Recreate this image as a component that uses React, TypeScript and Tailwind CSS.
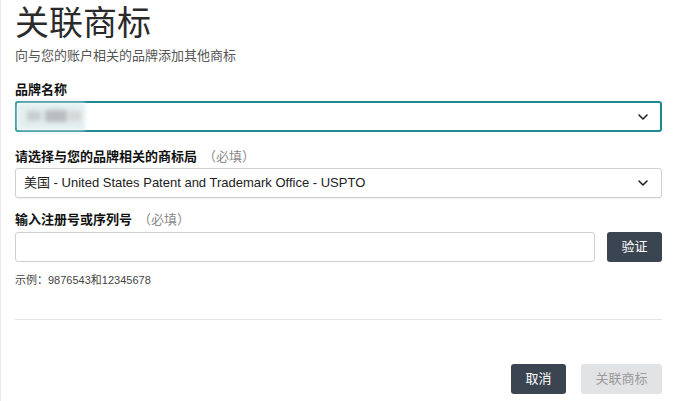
import React from "react";

const font = "font-['Liberation_Sans','Noto_Sans_CJK_SC',sans-serif]";

function Chevron() {
  return (
    <svg width="10" height="6" viewBox="0 0 10 6" fill="none" className="shrink-0">
      <path d="M1 1l4 4 4-4" stroke="#222" strokeWidth="1.6" strokeLinecap="round" strokeLinejoin="round" />
    </svg>
  );
}

function Label({ text, required }: { text: string; required?: boolean }) {
  return (
    <p className="text-[13px] leading-[18px] font-bold text-[#111]">
      {text}
      {required ? <span className="ml-[6px] font-normal text-[#888]">（必填）</span> : null}
    </p>
  );
}

export default function App() {
  return (
    <div className={`w-[680px] h-[401px] overflow-hidden bg-white border-l border-[#ececec] pl-[14px] pr-[18px] ${font}`}>
      <h1 className="pt-[3px] text-[34px] leading-[40px] font-normal text-[#2a2a2a]">关联商标</h1>
      <p className="mt-[4px] text-[13px] leading-[18px] text-[#555]">向与您的账户相关的品牌添加其他商标</p>

      <div className="mt-[16px]">
        <Label text="品牌名称" />
      </div>
      <div className="mt-[2px] flex h-[31px] items-center justify-between rounded-[3px] border-2 border-[#1d8991] pr-[12px]">
        <div className="relative h-[27px] w-[68px] blur-[2px] bg-[#e3efef]">
          <div className="absolute left-[10px] top-[8px] h-[10px] w-[14px] bg-[#c9cdcf]" />
          <div className="absolute left-[28px] top-[7px] h-[12px] w-[22px] bg-[#b8bcbf]" />
          <div className="absolute left-[52px] top-[8px] h-[10px] w-[12px] bg-[#d4d7d8]" />
        </div>
        <Chevron />
      </div>

      <div className="mt-[16px]">
        <Label text="请选择与您的品牌相关的商标局" required />
      </div>
      <div className="mt-[2px] flex h-[30px] items-center justify-between rounded-[3px] border border-[#cfcfcf] pl-[8px] pr-[13px] shadow-[0_1px_1px_rgba(0,0,0,0.06)]">
        <span className="text-[13px] text-[#222]">美国 - United States Patent and Trademark Office - USPTO</span>
        <Chevron />
      </div>

      <div className="mt-[13px]">
        <Label text="输入注册号或序列号" required />
      </div>
      <div className="mt-[3px] flex gap-[12px]">
        <div className="h-[30px] flex-1 rounded-[3px] border border-[#cfcfcf]" />
        <button className="h-[30px] w-[55px] rounded-[3px] bg-[#3b4552] text-[13px] text-white">验证</button>
      </div>
      <p className="mt-[10px] text-[11px] leading-[16px] text-[#444]">示例：9876543和12345678</p>

      <div className="mt-[31px] border-t border-[#e3e3e3]" />

      <div className="mt-[44px] flex justify-end gap-[15px]">
        <button className="h-[30px] w-[55px] rounded-[3px] bg-[#3b4552] text-[13px] text-white">取消</button>
        <button className="h-[30px] w-[81px] rounded-[3px] bg-[#e2e3e4] text-[13px] text-[#9a9a9a]">关联商标</button>
      </div>
    </div>
  );
}
